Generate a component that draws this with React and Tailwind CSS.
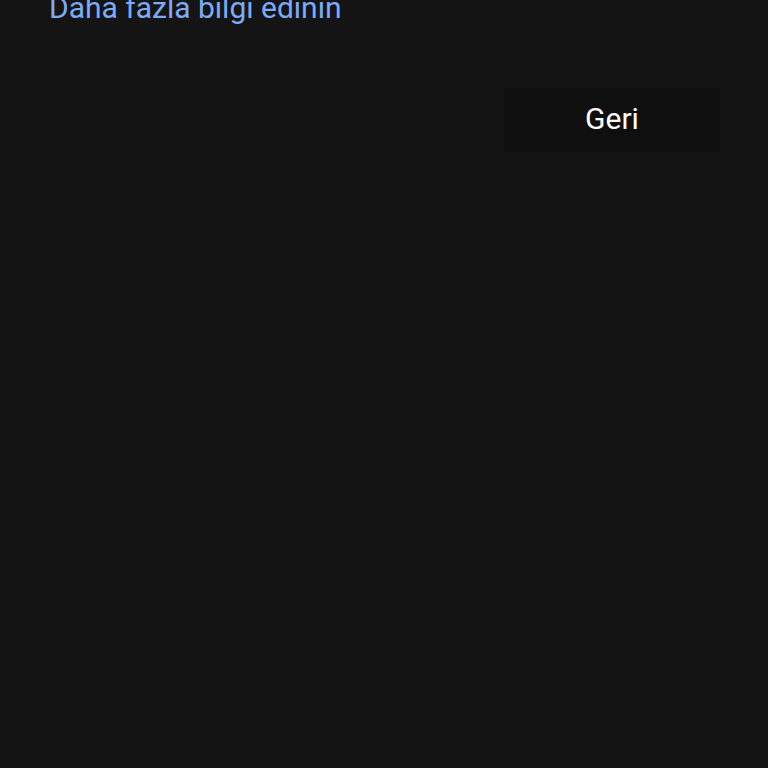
export default function App() {
  return (
    <div className="h-[768px] w-full overflow-hidden bg-[#141414] font-['Roboto',sans-serif]">
      <div className="px-[49px] -mt-[10px]">
        <a href="#" className="block text-[30px] leading-[36px] text-[#7cacf8]">
          Daha fazla bilgi edinin
        </a>
      </div>
      <div className="flex justify-end pr-[48px] pt-[62px]">
        <button
          type="button"
          className="h-[64px] w-[216px] bg-[#0f0f0f] pb-[3px] text-[30px] text-white"
        >
          Geri
        </button>
      </div>
    </div>
  )
}
